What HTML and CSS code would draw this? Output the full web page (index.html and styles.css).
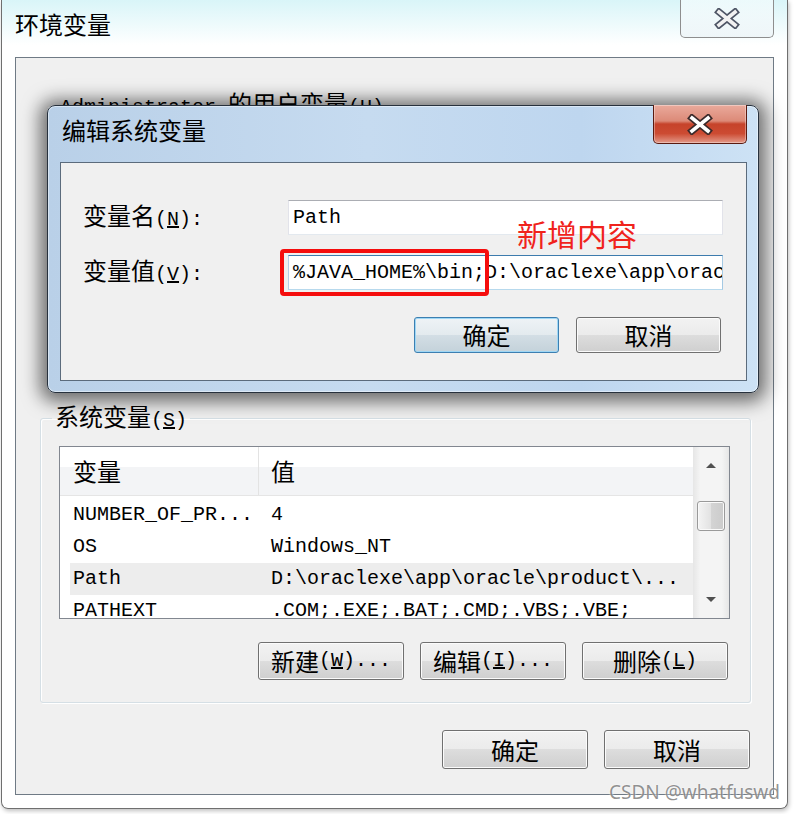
FILE: index.html
```html
<!DOCTYPE html>
<html lang="zh-CN">
<head>
    <meta charset="UTF-8">
    <title>环境变量</title>
    <link rel="stylesheet" href="styles.css">
</head>
<body>
    <div class="window">
        <div class="titlebar">
            <span class="title">环境变量</span>
            <div class="close close-plain">
                <svg width="26" height="21" viewBox="0 0 26 21">
                    <path d="M5 4 L21 17 M21 4 L5 17" stroke="#4e5565" stroke-width="7" stroke-linecap="square"/>
                    <path d="M5 4 L21 17 M21 4 L5 17" stroke="#f2f2f2" stroke-width="3.6" stroke-linecap="square"/>
                </svg>
            </div>
        </div>

        <div class="client">
            <div class="user-group">
                <span class="k">Administrator </span>的用户变量<span class="k">(<u>U</u>)</span>
            </div>

            <fieldset class="group">
                <legend>系统变量<span class="k">(<u>S</u>)</span></legend>
                <div class="listview">
                    <div class="list-main">
                        <div class="list-head">
                            <div class="head-cell first">变量</div>
                            <div class="head-cell">值</div>
                        </div>
                        <div class="rows">
                            <div class="row"><span class="name">NUMBER_OF_PR...</span><span class="value">4</span></div>
                            <div class="row"><span class="name">OS</span><span class="value">Windows_NT</span></div>
                            <div class="row selected"><span class="name">Path</span><span class="value">D:\oraclexe\app\oracle\product\...</span></div>
                            <div class="row"><span class="name">PATHEXT</span><span class="value">.COM;.EXE;.BAT;.CMD;.VBS;.VBE;</span></div>
                        </div>
                    </div>
                    <div class="scrollbar">
                        <div class="sb-btn">
                            <svg width="12" height="6" viewBox="0 0 12 6"><path d="M1 6 L6 1 L11 6 Z" fill="#505050"/></svg>
                        </div>
                        <div class="sb-track"><div class="thumb"></div></div>
                        <div class="sb-btn">
                            <svg width="12" height="6" viewBox="0 0 12 6"><path d="M1 0 L6 5 L11 0 Z" fill="#505050"/></svg>
                        </div>
                    </div>
                </div>
                <div class="btn-row">
                    <button class="btn">新建<span class="k">(<u>W</u>)...</span></button>
                    <button class="btn">编辑<span class="k">(<u>I</u>)...</span></button>
                    <button class="btn">删除<span class="k">(<u>L</u>)</span></button>
                </div>
            </fieldset>

            <div class="btn-row main-btns">
                <button class="btn">确定</button>
                <button class="btn">取消</button>
            </div>
        </div>

        <div class="dialog">
            <div class="dlg-title">编辑系统变量</div>
            <div class="close close-red">
                <svg width="26" height="21" viewBox="0 0 26 21">
                    <path d="M5 4 L21 17 M21 4 L5 17" stroke="#3b2a2a" stroke-width="7" stroke-linecap="square"/>
                    <path d="M5 4 L21 17 M21 4 L5 17" stroke="#ffffff" stroke-width="3.6" stroke-linecap="square"/>
                </svg>
            </div>
            <div class="dlg-client">
                <div class="dlg-form">
                    <label>变量名<span class="k">(<u>N</u>):</span></label>
                    <div class="field">Path</div>
                    <label>变量值<span class="k">(<u>V</u>):</span></label>
                    <div class="field-wrap">
                        <div class="field focus">%JAVA_HOME%\bin;D:\oraclexe\app\oracle\product\11.2.0\server\bin;</div>
                        <div class="mark"></div>
                    </div>
                </div>
                <div class="note">新增内容</div>
                <div class="btn-row dlg-btns">
                    <button class="btn default">确定</button>
                    <button class="btn">取消</button>
                </div>
            </div>
        </div>

        <div class="watermark">CSDN @whatfuswd</div>
    </div>
</body>
</html>
```

FILE: styles.css
```css
body {
    margin: 0;
    width: 794px;
    height: 814px;
    overflow: hidden;
    background-color: #ffffff;
    font-family: "Noto Sans CJK SC", "Liberation Sans", sans-serif;
    font-size: 24px;
    color: #000;
}

.k {
    font-family: "Liberation Mono", monospace;
    font-size: 20px;
}

/* outer window */
.window {
    position: relative;
    margin-left: 1px;
    width: 787px;
    height: 809px;
    box-sizing: border-box;
    border: 1px solid #6f6f6f;
    border-top: none;
    border-radius: 0 0 7px 7px;
    background: linear-gradient(#d9f5f8, #ffffff 45px);
    box-shadow: 1px 2px 4px rgba(0, 0, 0, 0.25);
}

.titlebar {
    height: 57px;
}

.title {
    display: block;
    padding: 12px 0 0 13px;
    line-height: 24px;
}

.close {
    position: absolute;
    top: 0;
    width: 94px;
    height: 38px;
    box-sizing: border-box;
    border-top: none;
    border-radius: 0 0 5px 5px;
    display: flex;
    justify-content: center;
    align-items: center;
}

.close-plain {
    right: 13px;
    border: 1px solid #8e8e8e;
    border-top: none;
    background: linear-gradient(rgba(255, 255, 255, 0.5), rgba(236, 244, 247, 0.8));
}

.client {
    margin: 0 13px;
    height: 738px;
    box-sizing: border-box;
    border: 1px solid #6f7a85;
    background-color: #f0f0f0;
}

.user-group {
    height: 344px;
    box-sizing: border-box;
    padding: 33px 0 0 44px;
    line-height: 24px;
}

/* system variables group */
.group {
    margin: 0 22px 0 24px;
    padding: 11px 20px 22px 18px;
    min-width: 0;
    border: 1px solid #d5dfe5;
    border-radius: 3px;
    box-shadow: inset 1px 1px 0 #ffffff, 1px 1px 0 #ffffff;
}

.group legend {
    margin-left: -7px;
    padding: 0 3px;
    line-height: 28px;
}

.listview {
    display: flex;
    height: 173px;
    box-sizing: border-box;
    border: 1px solid #828790;
    background-color: #ffffff;
}

.list-main {
    flex: 1;
    overflow: hidden;
}

.list-head {
    display: flex;
    height: 49px;
    box-sizing: border-box;
    border-bottom: 1px solid #e5e5e5;
    background: linear-gradient(#ffffff 0, #ffffff 42%, #f3f4f6 42%, #f3f4f6 100%);
}

.head-cell {
    padding-left: 12px;
    line-height: 48px;
}

.head-cell.first {
    width: 199px;
    box-sizing: border-box;
    padding-left: 13px;
    border-right: 1px solid #e3e3e3;
}

.rows {
    padding-top: 3px;
}

.row {
    display: flex;
    height: 32px;
    margin-left: 10px;
    line-height: 32px;
    font-family: "Liberation Mono", monospace;
    font-size: 20px;
    white-space: nowrap;
}

.row.selected {
    background-color: #ededed;
}

.row .name {
    width: 189px;
    flex-shrink: 0;
    box-sizing: border-box;
    padding-left: 3px;
}

.row .value {
    padding-left: 12px;
}

.scrollbar {
    width: 36px;
    display: flex;
    flex-direction: column;
    background: linear-gradient(90deg, #e6e6e6, #f4f4f4 20%, #f4f4f4 80%, #e6e6e6);
}

.sb-btn {
    height: 36px;
    display: flex;
    justify-content: center;
    align-items: center;
}

.sb-track {
    flex: 1;
}

.thumb {
    width: 28px;
    height: 30px;
    margin: 18px auto 0;
    box-sizing: border-box;
    border: 1px solid #9a9a9a;
    border-radius: 3px;
    background: linear-gradient(90deg, #f4f4f4, #e2e2e2 50%, #d4d4d4 50%, #cbcbcb);
    box-shadow: inset 0 0 0 1px #fafafa;
}

/* buttons */
.btn-row {
    display: flex;
    justify-content: flex-end;
    gap: 16px;
    margin-top: 23px;
    padding-right: 2px;
}

.btn {
    width: 146px;
    height: 38px;
    padding: 0;
    box-sizing: border-box;
    border: 1px solid #707070;
    border-radius: 3px;
    background: linear-gradient(#f2f2f2, #ebebeb 50%, #dddddd 50%, #cfcfcf);
    box-shadow: inset 0 0 0 1px #fbfbfb;
    font-family: inherit;
    font-size: 24px;
    color: #000;
    line-height: 1;
    display: flex;
    justify-content: center;
    align-items: center;
}

.main-btns {
    margin: 27px 23px 0 0;
    padding-right: 0;
}

.main-btns .btn {
    height: 39px;
}

/* edit dialog */
.dialog {
    position: absolute;
    left: 45px;
    top: 105px;
    width: 712px;
    height: 288px;
    box-sizing: border-box;
    border: 1px solid #27313d;
    border-radius: 8px;
    background: linear-gradient(90deg, #b9d0e8, #c6dbf0 45%, #bed6ef 75%, #cde2f5);
    box-shadow: inset 0 0 0 1px rgba(255, 255, 255, 0.45), 0 2px 18px 7px rgba(0, 0, 0, 0.55);
}

.dlg-title {
    height: 56px;
    box-sizing: border-box;
    padding: 12px 0 0 14px;
    line-height: 24px;
}

.close-red {
    top: -1px;
    right: 11px;
    height: 39px;
    border: 1px solid #5a1a10;
    border-top: none;
    background: linear-gradient(#eaaa9c, #dc8a78 42%, #c6432b 50%, #cc4b32 75%, #e39a8a);
    box-shadow: inset 0 0 0 1px rgba(255, 255, 255, 0.35);
}

.dlg-client {
    position: relative;
    margin: 0 11px 0 12px;
    height: 219px;
    box-sizing: border-box;
    border: 1px solid #5b6b7c;
    background-color: #f0f0f0;
}

.dlg-form {
    display: grid;
    grid-template-columns: 205px 435px;
    row-gap: 20px;
    align-items: center;
    padding: 37px 0 0 22px;
}

.dlg-form label {
    line-height: 24px;
}

.field {
    height: 35px;
    box-sizing: border-box;
    padding-left: 4px;
    border: 1px solid;
    border-color: #abadb3 #e2e3ea #e3e9ef #e2e3ea;
    background-color: #ffffff;
    font-family: "Liberation Mono", monospace;
    font-size: 20px;
    line-height: 33px;
    white-space: nowrap;
    overflow: hidden;
}

.field.focus {
    border-color: #3d7bad #a4c9e3 #b7d9ed #b5cfe7;
}

.field-wrap {
    position: relative;
}

.mark {
    position: absolute;
    left: -8px;
    top: -6px;
    width: 209px;
    height: 47px;
    box-sizing: border-box;
    border: 4px solid #f50d0d;
    border-radius: 4px;
}

.note {
    position: absolute;
    left: 456px;
    top: 55px;
    font-size: 30px;
    line-height: 30px;
    color: #f0231c;
}

.dlg-btns {
    gap: 17px;
    margin-top: 27px;
    padding-right: 25px;
}

.dlg-btns .btn {
    width: 145px;
    height: 36px;
}

.btn.default {
    border-color: #3c7fb1;
    background: linear-gradient(#eef3f6, #e3eaee 50%, #d3dee5 50%, #c4d2da);
    box-shadow: inset 0 0 0 1px #9fd7f5;
}

.watermark {
    position: absolute;
    left: 607px;
    top: 781px;
    font-family: "Noto Sans", sans-serif;
    font-size: 19px;
    line-height: 22px;
    color: rgba(110, 110, 110, 0.75);
    text-shadow: 0 0 2px #ffffff;
}
```
